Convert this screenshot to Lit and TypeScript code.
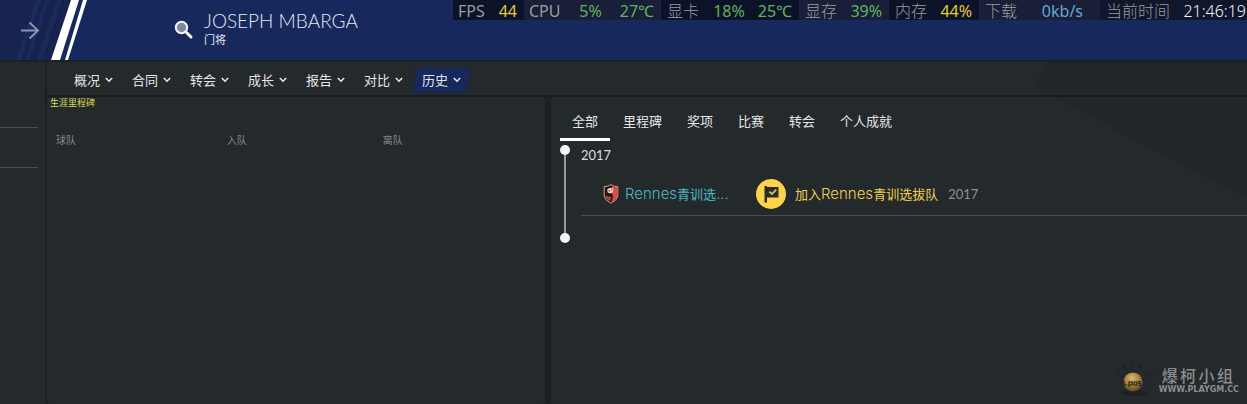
import { LitElement, html, css, svg } from "lit";
import { customElement } from "lit/decorators.js";
import { classMap } from "lit/directives/class-map.js";

const MONITOR = [
  { key: "fps", label: "FPS", values: [["44", "yellow"]] },
  { key: "cpu", label: "CPU", values: [["5%", "green"], ["27℃", "green"]] },
  { key: "gpu", label: "显卡", values: [["18%", "green"], ["25℃", "green"]] },
  { key: "vram", label: "显存", values: [["39%", "green"]] },
  { key: "ram", label: "内存", values: [["44%", "yellow"]] },
  { key: "net", label: "下载", values: [["0kb/s", "blue"]] },
  { key: "time", label: "当前时间", values: [["21:46:19", "white"]] },
];
const MENUS = ["概况", "合同", "转会", "成长", "报告", "对比", "历史"];
const TABS = ["全部", "里程碑", "奖项", "比赛", "转会", "个人成就"];

@customElement("system-monitor")
class SystemMonitor extends LitElement {
  static styles = css`
    :host {
      display: grid;
      grid-template-columns: 71px 137px 138px 90px 90px 121px 147px;
      font: 300 16px/22px "Noto Sans", "Noto Sans CJK SC", sans-serif;
      color: #9a9c9f;
    }
    .cell {
      display: flex;
      justify-content: space-between;
      height: 20px;
      padding: 0 7px 0 6px;
      background: #0c1228;
      white-space: nowrap;
    }
    .cell:nth-child(even) { background: #191f38; }
    .cell.net { padding-right: 17px; }
    .cell.time { padding-right: 1px; background: #10162c; }
    .fps, .cpu { font-weight: 400; }
    .cell.fps, .cell.cpu { padding-left: 5px; }
    .values { display: flex; gap: 13px; }
    .cpu .values { gap: 18px; }
    .green, .yellow, .blue { font-weight: 400; }
    .green { color: #60b45c; }
    .yellow { color: #e6c93a; }
    .blue { color: #64a8d4; }
    .white { color: #f4f4f4; }
  `;
  render() {
    return MONITOR.map(
      (m) => html`<div class="cell ${m.key}">
        <span>${m.label}</span>
        <span class="values">${m.values.map(([v, c]) => html`<span class=${c}>${v}</span>`)}</span>
      </div>`
    );
  }
}

@customElement("player-header")
class PlayerHeader extends LitElement {
  static styles = css`
    :host {
      position: relative;
      display: flex;
      height: 60px;
      background: #17285c;
      color: #e6e9f2;
    }
    .stripes { width: 90px; height: 60px; flex: none; }
    .forward {
      position: absolute;
      left: 20px;
      top: 20px;
      width: 20px;
      height: 20px;
      padding: 0;
      border: 0;
      background: none;
    }
    .forward svg, .search svg { display: block; width: 100%; height: 100%; }
    .search {
      width: 20px;
      height: 20px;
      margin: 20px 10px 0 84px;
      padding: 0;
      border: 0;
      background: none;
    }
    h1 {
      margin: 10px 0 0;
      font: 300 19px/22px Lato, sans-serif;
    }
    p { margin: 0; font: 11px/14px "Noto Sans CJK SC", sans-serif; }
    system-monitor { position: absolute; right: 0; top: 0; }
  `;
  render() {
    return html`
      <svg class="stripes" viewBox="0 0 90 60" aria-hidden="true">
        <path d="M0 0H71L51 60H0Z" fill="#16234e" />
        <path d="M36 0H41L21 60H16ZM45 0H49L29 60H25ZM57 0H62L42 60H37Z" fill="#1b2a5a" />
        <path d="M71 0H79L60 60H51Z" fill="#fff" />
        <path d="M83 0H87L68 60H65Z" fill="#fff" />
      </svg>
      <button class="forward" aria-label="前进">
        <svg viewBox="0 0 20 20" fill="none" stroke="#8e93b4" stroke-width="2">
          <path d="M1 10.5H18M9.5 2.5L18 10.5L9.5 18.5" />
        </svg>
      </button>
      <button class="search" aria-label="搜索">
        <svg viewBox="0 0 20 20">
          <path d="M12.5 12.5L17 17" stroke="#f4f6fb" stroke-width="3" stroke-linecap="round" />
          <circle cx="7.5" cy="7.5" r="5.7" fill="#7f88a6" stroke="#f4f6fb" stroke-width="2" />
        </svg>
      </button>
      <div>
        <h1>JOSEPH MBARGA</h1>
        <p>门将</p>
      </div>
      <system-monitor></system-monitor>
    `;
  }
}

@customElement("section-nav")
class SectionNav extends LitElement {
  static styles = css`
    :host { position: relative; display: block; background: #24292c; border-bottom: 2px solid #191c1f; }
    :host::after {
      content: "";
      position: absolute;
      inset: 0 0 0 auto;
      width: 211px;
      background: #212629;
      clip-path: polygon(4% 0, 100% 0, 100% 100%, 8% 100%, 0 78%);
    }
    nav { display: flex; gap: 3px; padding: 4px 0 2px 19px; height: 27px; }
    button {
      display: flex;
      align-items: center;
      gap: 5px;
      height: 27px;
      padding: 0 8px;
      border: 0;
      background: none;
      color: #e4e6e8;
      font: 13px/20px "Noto Sans CJK SC", sans-serif;
      position: relative;
      isolation: isolate;
    }
    .active::before {
      content: "";
      position: absolute;
      inset: 3px 2px 2px;
      z-index: -1;
      border-radius: 2px;
      background: #17285f;
      transform: skewX(-10deg);
      box-shadow: 0 0 3px 1px #17285f;
    }
    svg { width: 8px; height: 6px; }
  `;
  render() {
    return html`<nav>
      ${MENUS.map(
        (m) => html`<button class=${classMap({ active: m === "历史" })}>
          ${m}<svg viewBox="0 0 8 6" fill="none" stroke="#e4e6e8" stroke-width="1.6"><path d="M.8 1L4 4.2L7.2 1" /></svg>
        </button>`
      )}
    </nav>`;
  }
}

@customElement("career-milestones")
class CareerMilestones extends LitElement {
  static styles = css`
    :host { display: block; background: #24292c; border-radius: 3px; }
    h2 {
      margin: 0;
      padding: 0 3px;
      color: #d6dc4c;
      font: 9px/12px "Noto Sans CJK SC", sans-serif;
    }
    table { width: 100%; margin-top: 24px; border-collapse: collapse; table-layout: fixed; }
    th {
      box-sizing: border-box;
      padding: 0 0 0 9px;
      text-align: left;
      color: #85888b;
      font: 10px/14px "Noto Sans CJK SC", sans-serif;
    }
    .team { width: 34.3%; }
    .joined { width: 31.3%; }
  `;
  render() {
    return html`
      <h2>生涯里程碑</h2>
      <table>
        <thead>
          <tr><th class="team">球队</th><th class="joined">入队</th><th>离队</th></tr>
        </thead>
      </table>
    `;
  }
}

const crest = svg`
  <path d="M1.2 2.6Q4.6 2.9 8 .6Q11.4 2.9 14.8 2.6V12Q14.4 16 8 19.3Q1.6 16 1.2 12Z" fill="#1c1517" stroke="#d9a184" stroke-width="1" />
  <path d="M9 1.8Q11.4 3.2 14.2 3.1V12Q13.7 15.4 8.3 18.3L10 13L8.5 8Z" fill="#e04a45" />
  <path d="M4.2 5.6Q4.8 3.9 7 3.9Q9.8 3.6 10.6 6L9.7 8.6L7.2 9.6L4.6 8.4Z" fill="#f0cfc4" />
  <path d="M5.7 6.1H7V7.5H5.7ZM8.2 5.2H9.3V6.5H8.2Z" fill="#a1423e" />
  <path d="M2.4 11.4L6 12.4L8.8 13.6L6.6 16.9Q3 15.2 2.4 11.4Z" fill="#b9443e" />`;

@customElement("history-panel")
class HistoryPanel extends LitElement {
  static styles = css`
    :host {
      display: block;
      padding-left: 9px;
      border-radius: 3px 0 0 3px;
      background: #24292c linear-gradient(to bottom left, #212629 50%, transparent 50%) no-repeat right top / 194px 102px;
      color: #dcdee0;
      font: 13px/20px "Noto Sans CJK SC", sans-serif;
    }
    .tabs { display: flex; gap: 1px; height: 44px; }
    .tab {
      padding: 6px 12px 0;
      border: 0;
      border-bottom: 3px solid transparent;
      background: none;
      color: #e4e6e8;
      font: inherit;
    }
    .tab.active { border-color: #fff; }
    .timeline { display: flex; gap: 11px; padding-top: 4px; }
    .rail {
      display: flex;
      flex-direction: column;
      align-items: center;
      width: 10px;
      height: 98px;
    }
    .dot { width: 10px; height: 10px; border-radius: 50%; background: #f4f4f5; }
    .line { flex: 1; width: 2px; background: #96989a; }
    .events { flex: 1; min-width: 0; }
    h3 { margin: 0; font: 400 13px/20px Lato, sans-serif; }
    .row {
      display: flex;
      align-items: center;
      height: 42px;
      margin-top: 8px;
      border-bottom: 1px solid #4b4f52;
      padding-left: 22px;
    }
    .crest { width: 16px; height: 20px; margin-right: 6px; flex: none; }
    .club {
      min-width: 104px;
      color: #4cb8c4;
      text-decoration: none;
      white-space: nowrap;
    }
    .latin { font: 300 15px/20px Inter, sans-serif; }
    .badge { width: 30px; height: 30px; margin: 0 9px 0 27px; flex: none; }
    .event { color: #f0d052; white-space: nowrap; }
    .year { margin-left: 10px; color: #8d9093; font-family: Lato, sans-serif; }
  `;
  render() {
    return html`
      <div class="tabs" role="tablist">
        ${TABS.map(
          (t, i) => html`<button role="tab" aria-selected=${i === 0} class=${classMap({ tab: true, active: i === 0 })}>${t}</button>`
        )}
      </div>
      <div class="timeline">
        <div class="rail"><div class="dot"></div><div class="line"></div><div class="dot"></div></div>
        <div class="events">
          <h3>2017</h3>
          <div class="row">
            <svg class="crest" viewBox="0 0 16 20" aria-hidden="true">${crest}</svg>
            <a class="club" href="#"><span class="latin">Rennes</span>青训选<span class="latin">...</span></a>
            <svg class="badge" viewBox="0 0 30 30" aria-hidden="true">
              <circle cx="15" cy="15" r="15" fill="#fcd34b" />
              <path d="M8.5 7H11V8H22.5V18.5H11V23.5H8.5Z" fill="#2c2b25" />
              <path d="M13.2 12.6L16 15L20.2 10.6" fill="none" stroke="#d4c070" stroke-width="1.8" />
            </svg>
            <span class="event">加入<span class="latin">Rennes</span>青训选拔队</span>
            <span class="year">2017</span>
          </div>
        </div>
      </div>
    `;
  }
}

@customElement("site-mark")
class SiteMark extends LitElement {
  static styles = css`
    :host { display: flex; align-items: center; gap: 4px; color: #8a8d8f; }
    svg { width: 40px; height: 36px; }
    .name {
      font: 500 16px/20px "Noto Sans CJK SC", sans-serif;
      display: flex;
      justify-content: space-between;
      padding: 0 6px 0 3px;
    }
    .url { font: bold 8px/10px "DejaVu Sans", sans-serif; }
  `;
  render() {
    return html`
      <svg viewBox="0 0 40 36" aria-hidden="true">
        <defs>
          <radialGradient id="ball" cx=".45" cy=".3" r=".7">
            <stop offset="0" stop-color="#d6b878" />
            <stop offset=".6" stop-color="#a5792f" />
            <stop offset="1" stop-color="#594526" />
          </radialGradient>
        </defs>
        <ellipse cx="20" cy="31" rx="13" ry="3" fill="#1c2023" />
        <g fill="none" stroke="#17223a" stroke-width="1.2">
          <path d="M9 15L3 11M13 10L8 4M18 9V2M22 10L26 4M27 18Q32 17 34 12M32 10L34 13L38 11" />
        </g>
        <g fill="#17223a"><circle cx="3" cy="11" r="1.5" /><circle cx="8" cy="4" r="1.5" /><circle cx="18" cy="2" r="1.3" /><circle cx="26" cy="4" r="1.7" /></g>
        <circle cx="18" cy="20" r="9.5" fill="url(#ball)" />
        <path d="M9 19Q8 24 12 23M14 25V20H17V23H14M19 20H22V23H19ZM26 19.5H24V21.5H25.5V23.5H23.5" fill="none" stroke="#1e2024" stroke-width="1.2" />
      </svg>
      <div>
        <div class="name"><span>爆</span><span>柯</span><span>小</span><span>组</span></div>
        <div class="url">WWW.PLAYGM.CC</div>
      </div>
    `;
  }
}

@customElement("app-root")
class AppRoot extends LitElement {
  static styles = css`
    :host {
      position: relative;
      display: flex;
      flex-direction: column;
      min-height: 100vh;
      background: #1d2023;
    }
    .body { flex: 1; display: grid; grid-template-columns: 45px minmax(0, 1fr); gap: 2px; padding-top: 2px; }
    aside { background: #24292c; padding: 65px 7px 0 0; }
    .rule { height: 39px; border-top: 1px solid #4b4f52; }
    main { display: flex; flex-direction: column; }
    .panels { flex: 1; display: grid; grid-template-columns: 498fr 696fr; gap: 6px; }
    site-mark { position: absolute; right: 8px; bottom: 6px; }
  `;
  render() {
    return html`
      <player-header></player-header>
      <div class="body">
        <aside><div class="rule"></div><div class="rule"></div></aside>
        <main>
          <section-nav></section-nav>
          <div class="panels">
            <career-milestones></career-milestones>
            <history-panel></history-panel>
          </div>
        </main>
      </div>
      <site-mark></site-mark>
    `;
  }
}
